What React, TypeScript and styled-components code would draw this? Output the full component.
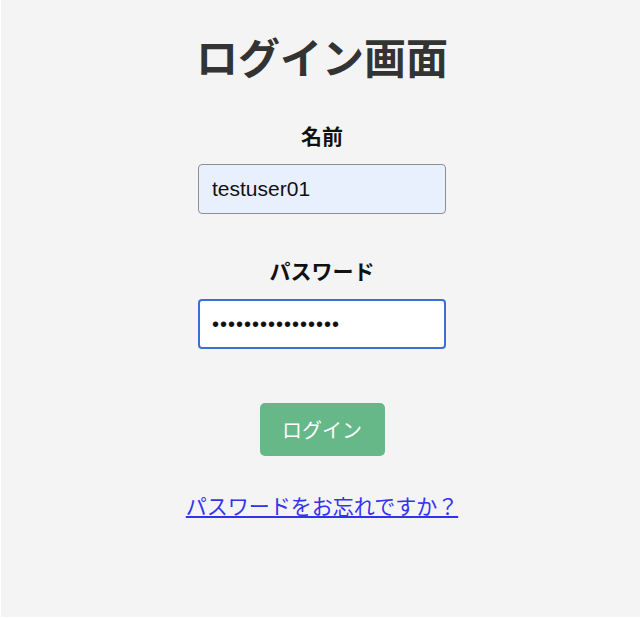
import React, { useEffect, useRef, useState } from "react";
import styled, { createGlobalStyle } from "styled-components";

const Global = createGlobalStyle`
  html, body { margin: 0; padding: 0; background: #ffffff; }
  body { font-family: "Liberation Sans", "Noto Sans CJK JP", sans-serif; }
  * { box-sizing: border-box; }
`;

const Page = styled.div`
  margin-left: 1px;
  height: 617px;
  background: #f4f4f4;
  display: flex;
  flex-direction: column;
  align-items: center;
  padding: 26px 0 0 3px;
`;

const Title = styled.h1`
  margin: 0 0 34px;
  font-family: "Noto Sans CJK JP", sans-serif;
  font-size: 42px;
  font-weight: 700;
  line-height: 60px;
  color: #333333;
`;

const Form = styled.form`
  display: flex;
  flex-direction: column;
  align-items: center;
`;

const Field = styled.div`
  display: flex;
  flex-direction: column;
  align-items: center;
  margin-bottom: 41px;
`;

const Label = styled.label`
  font-family: "Noto Sans CJK JP", sans-serif;
  font-size: 21px;
  font-weight: 700;
  line-height: 30px;
  color: #111;
  margin-bottom: 14px;
`;

const Input = styled.input<{ $filled?: boolean; $secret?: boolean }>`
  width: 248px;
  height: 50px;
  padding: 0 13px;
  font-family: "Liberation Sans", "Noto Sans CJK JP", sans-serif;
  font-size: ${(p) => (p.$secret ? "20px" : "21px")};
  letter-spacing: ${(p) => (p.$secret ? "1px" : "0")};
  color: #111;
  background: ${(p) => (p.$filled ? "#e8f0fe" : "#ffffff")};
  border: 1px solid #8f8f8f;
  border-radius: 4px;
  outline: none;
  caret-color: #000;
  &:focus {
    border: 2px solid #3a6fd8;
    padding: 0 12px;
  }
`;

const Button = styled.button`
  margin-top: 13px;
  width: 125px;
  height: 53px;
  border: none;
  border-radius: 5px;
  background: #66b889;
  color: #ffffff;
  font-family: "Noto Sans CJK JP", sans-serif;
  font-size: 20px;
  cursor: pointer;
`;

const Link = styled.a`
  margin-top: 34px;
  font-family: "Noto Sans CJK JP", sans-serif;
  font-size: 21px;
  line-height: 30px;
  color: #3333ee;
  text-decoration: underline;
`;

export default function App() {
  const [name, setName] = useState("testuser01");
  const [pw, setPw] = useState("passwordpassword");
  const ref = useRef<HTMLInputElement>(null);
  useEffect(() => {
    ref.current?.focus();
  }, []);
  return (
    <>
      <Global />
      <Page>
        <Title>ログイン画面</Title>
        <Form onSubmit={(e) => e.preventDefault()}>
          <Field>
            <Label htmlFor="name">名前</Label>
            <Input id="name" $filled value={name} onChange={(e) => setName(e.target.value)} />
          </Field>
          <Field>
            <Label htmlFor="pw">パスワード</Label>
            <Input id="pw" ref={ref} type="password" $secret value={pw} onChange={(e) => setPw(e.target.value)} />
          </Field>
          <Button type="submit">ログイン</Button>
        </Form>
        <Link href="#">パスワードをお忘れですか？</Link>
      </Page>
    </>
  );
}
